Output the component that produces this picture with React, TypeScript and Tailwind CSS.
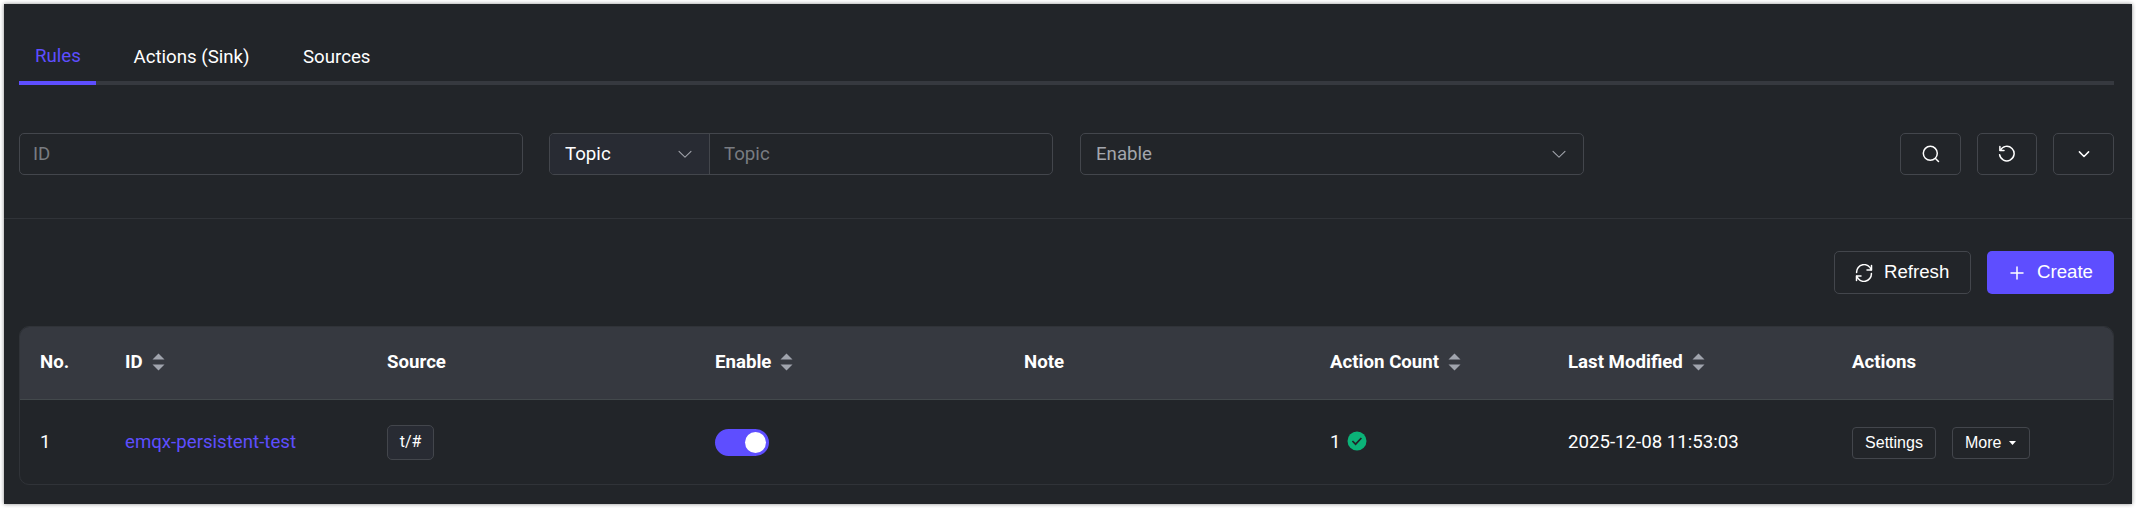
import type { ReactNode } from "react"
import clsx from "clsx"

function SortCarets() {
  return (
    <svg className="ml-[9px] h-[18px] w-[13px] shrink-0 text-[#a0a4ad]" viewBox="0 0 13 18" fill="currentColor">
      <path d="M6.5 0.5 12.5 6.5H0.5Z" />
      <path d="M6.5 17.5 0.5 11.5H12.5Z" />
    </svg>
  )
}

// Element Plus icons share a 1024 grid
function ArrowDown({ className }: { className?: string }) {
  return (
    <svg className={clsx("h-[18px] w-[18px] shrink-0", className)} viewBox="0 0 1024 1024" fill="currentColor">
      <path d="M831.872 340.864 512 652.672 192.128 340.864a30.592 30.592 0 0 0-42.752 0 29.12 29.12 0 0 0 0 41.6L489.664 714.24a32 32 0 0 0 44.672 0l340.288-331.712a29.12 29.12 0 0 0 0-41.728 30.592 30.592 0 0 0-42.752 0z" />
    </svg>
  )
}

function Icon({ children, className }: { children: ReactNode; className?: string }) {
  return (
    <svg
      className={clsx("h-[18px] w-[18px] shrink-0", className)}
      viewBox="0 0 18 18"
      fill="none"
      stroke="currentColor"
      strokeWidth="1.5"
      strokeLinecap="round"
      strokeLinejoin="round"
    >
      {children}
    </svg>
  )
}

function IconButton({ children, className }: { children: ReactNode; className: string }) {
  return (
    <button className={clsx("flex h-[42px] items-center justify-center rounded-[5px] border border-[#43464c]", className)}>
      {children}
    </button>
  )
}

const columns = [
  { label: "No.", sortable: false },
  { label: "ID", sortable: true },
  { label: "Source", sortable: false },
  { label: "Enable", sortable: true },
  { label: "Note", sortable: false },
  { label: "Action Count", sortable: true },
  { label: "Last Modified", sortable: true },
  { label: "Actions", sortable: false },
]

const grid = "grid grid-cols-[85px_262px_328px_309px_306px_238px_284px_1fr] pl-5"

export default function App() {
  return (
    <div className="h-[508px] bg-white p-1 font-['Roboto',sans-serif] text-[18.67px] leading-6 text-white">
      <div className="h-[500px] bg-[#222529] shadow-[0_0_4px_rgba(0,0,0,0.45)]">
        <nav className="mr-[18px] ml-[15px] flex h-[81px] items-end border-b-4 border-[#36393f]">
          <span className="-mb-1 w-[77px] border-b-4 border-[#5e4eff] pb-[13px] pl-4 text-[#5e4eff]">Rules</span>
          <span className="ml-[37.5px] pb-3">Actions (Sink)</span>
          <span className="ml-[53.5px] pb-3">Sources</span>
        </nav>

        <div className="flex h-[134px] items-start border-b border-[#303338] pt-12 pr-[18px] pl-[15px]">
          <div className="flex h-[42px] w-[504px] items-center rounded-[5px] border border-[#43464c] pl-[13px] text-[#797c81]">
            ID
          </div>
          <div className="ml-[26px] flex h-[42px] w-[504px] overflow-hidden rounded-[5px] border border-[#43464c]">
            <div className="flex w-[160px] items-center justify-between border-r border-[#43464c] bg-[#282b33] pr-[15px] pl-[15px]">
              Topic
              <ArrowDown className="text-[#a3a6ad]" />
            </div>
            <div className="flex items-center pl-[14px] text-[#797c81]">Topic</div>
          </div>
          <div className="ml-[27px] flex h-[42px] w-[504px] items-center justify-between rounded-[5px] border border-[#43464c] pr-[15px] pl-[15px] text-[#a3a6ad]">
            Enable
            <ArrowDown />
          </div>
          <div className="ml-auto flex gap-4">
            <IconButton className="w-[61px]">
              <Icon>
                <circle cx="8.3" cy="8.3" r="7" />
                <path d="m13.5 13.5 3 3" />
              </Icon>
            </IconButton>
            <IconButton className="w-[60px]">
              <Icon>
                <path d="M1.9 1.5V5.5H6" />
                <path d="M2.3 5.3A7.3 7.3 0 1 1 1.6 9.7" />
              </Icon>
            </IconButton>
            <IconButton className="w-[61px]">
              <Icon>
                <path d="m4.4 6.9 4.6 4.6 4.6-4.6" />
              </Icon>
            </IconButton>
          </div>
        </div>

        <div className="flex justify-end gap-4 pt-8 pr-[18px]">
          <button className="flex h-[43px] w-[137px] items-center rounded-[5px] border border-[#43464c] pl-5 font-['Liberation_Sans',sans-serif]">
            <Icon>
              <path d="M16.5 1.5V6H12" />
              <path d="M16.2 5.7A7.5 7.5 0 0 0 1.6 8.4" />
              <path d="M1.5 16.5V12H6" />
              <path d="M1.8 12.3A7.5 7.5 0 0 0 16.4 9.6" />
            </Icon>
            <span className="mb-0.5 ml-[11px]">Refresh</span>
          </button>
          <button className="flex h-[43px] w-[127px] items-center rounded-[5px] bg-[#5e4eff] pl-[21px] font-['Liberation_Sans',sans-serif]">
            <Icon>
              <path d="M9 3V15M3 9H15" />
            </Icon>
            <span className="mb-0.5 ml-[11px]">Create</span>
          </button>
        </div>

        <div className="mt-8 mr-[18px] ml-[15px] h-[159px] overflow-hidden rounded-[10px] border border-[#303338]">
          <div className={clsx(grid, "h-[73px] items-center border-b border-[#43494c] bg-[#363940] pb-0.5 font-bold")}>
            {columns.map((column) => (
              <div key={column.label} className="flex items-center">
                {column.label}
                {column.sortable && <SortCarets />}
              </div>
            ))}
          </div>
          <div className={clsx(grid, "h-[84px] items-center")}>
            <div>1</div>
            <div className="text-[#5e4eff]">emqx-persistent-test</div>
            <div>
              <span className="flex h-[35px] w-[47px] items-center justify-center rounded-[5px] border border-[#43464c] bg-[#282b33] text-base">
                t/#
              </span>
            </div>
            <div>
              <div className="flex h-[27px] w-[54px] items-center justify-end rounded-full bg-[#5e4eff] pr-[3px]">
                <div className="h-[21px] w-[21px] rounded-full bg-white" />
              </div>
            </div>
            <div />
            <div className="flex items-center">
              1
              <svg className="-mt-[3px] ml-1.5 h-5 w-5" viewBox="0 0 20 20" fill="none">
                <circle cx="10" cy="10" r="9.5" fill="#0bb378" />
                <path d="m5.4 10 3.2 3.2 5.8-6.2" stroke="#222529" strokeWidth="1.7" />
              </svg>
            </div>
            <div>2025-12-08 11:53:03</div>
            <div className="mt-0.5 flex gap-4 font-['Liberation_Sans',sans-serif] text-base">
              <button className="h-8 w-[84px] rounded-[4px] border border-[#43464c]">Settings</button>
              <button className="flex h-8 w-[78px] items-center rounded-[4px] border border-[#43464c] pl-3">
                More
                <svg className="ml-2 h-1 w-[7px]" viewBox="0 0 7 4" fill="currentColor">
                  <path d="M0 0H7L3.5 4Z" />
                </svg>
              </button>
            </div>
          </div>
        </div>
      </div>
    </div>
  )
}
